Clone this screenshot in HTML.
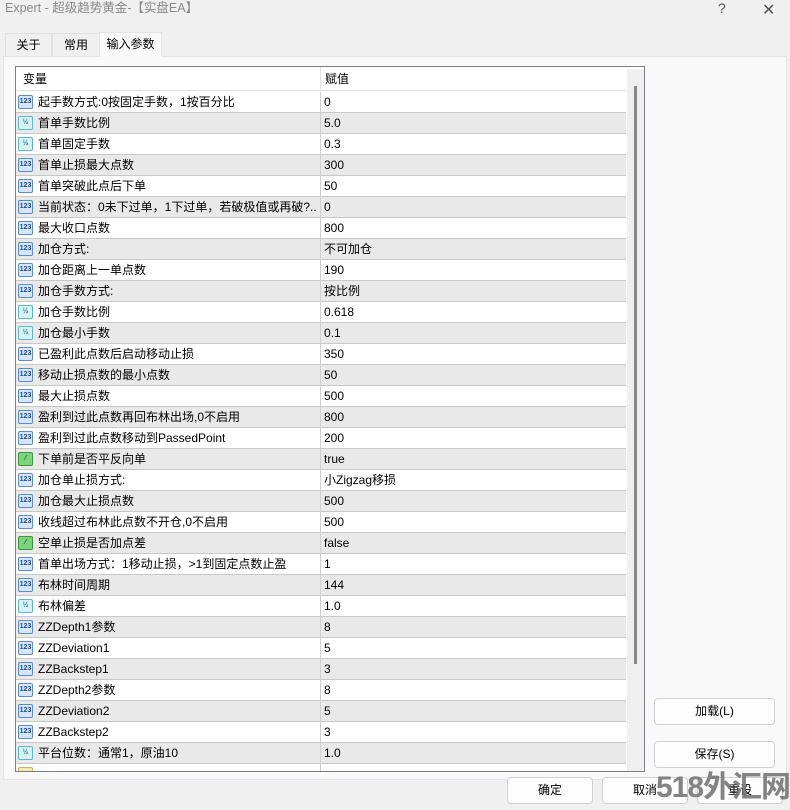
<!DOCTYPE html>
<html><head><meta charset="utf-8"><style>
*{box-sizing:border-box;margin:0;padding:0}
html,body{width:790px;height:810px;overflow:hidden}
body{background:#f0f0f0;font-family:"Liberation Sans","Noto Sans CJK SC",sans-serif;font-size:12px;color:#000;position:relative}
.title{position:absolute;left:5px;top:0;height:20px;line-height:16px;color:#8a8a8a;font-size:12.5px}
.tb{position:absolute;top:0;color:#555;font-size:14px}
.tab{position:absolute;top:33px;height:23px;line-height:23px;text-align:center;background:#f0f0f0;border:1px solid #e0e0e0;border-bottom:none}
.panel{position:absolute;left:3px;top:56px;width:784px;height:724px;background:#f9f9f9;border:1px solid #e3e3e3}
.list{position:absolute;left:15px;top:66px;width:630px;height:706px;border:1px solid #7a7f88;background:#fff;overflow:hidden}
.hdr{position:absolute;left:0;top:0;width:610px;height:24px;background:#fff;border-bottom:1px solid #e0e0e0}
.hdr span{position:absolute;top:0;line-height:24px}
.row{position:absolute;left:0;width:610px;height:21px;border-bottom:1px solid #c8c8c8;line-height:20px}
.row.g{background:#e9e9e9}
.row .n{position:absolute;left:22px;top:0;white-space:nowrap}
.row .v{position:absolute;left:308px;top:0}
.row .d{position:absolute;left:304px;top:0;width:1px;height:21px;background:#d0d0d0}
.ic{position:absolute;left:2px;top:3px;width:15px;height:14px;border-radius:2px;font-size:7px;line-height:12px;text-align:center;font-weight:bold}
.i1{background:#d6e6f8;border:1px solid #5b8ccc;color:#1d4f9c}
.i2{background:#d8f2f6;border:1px solid #5cb8c8;color:#2a7c8c}
.i3{background:#7fd27f;border:1px solid #3a9a3a;color:#135e13}
.i4{background:#f5e9a8;border:1px solid #c9b45a}
.vd{position:absolute;left:304px;top:0;width:1px;height:24px;background:#e0e0e0}
.sb{position:absolute;left:611px;top:2px;width:17px;height:702px;background:#efefef}
.th{position:absolute;left:7px;top:17px;width:3px;height:578px;background:#888}
.btn{position:absolute;height:27px;background:#fdfdfd;border:1px solid #d0d0d0;border-radius:4px;text-align:center;line-height:25px}
.wm{position:absolute;left:656px;top:770px;font-size:30px;line-height:36px;white-space:nowrap;font-weight:bold;color:rgba(110,110,110,.85);letter-spacing:-1px}
</style></head><body>
<div class="title">Expert - 超级趋势黄金-【实盘EA】</div>
<div class="tb" style="left:718px">?</div>
<div class="tb" style="left:762px;font-size:16px">✕</div>
<div class="tab" style="left:5px;width:47px">关于</div>
<div class="tab" style="left:52px;width:48px">常用</div>
<div class="tab" style="left:99px;width:63px;background:#f9f9f9;top:32px;height:25px;z-index:2;border-color:#e3e3e3">输入参数</div>
<div class="panel"></div>
<div class="list">
<div class="hdr"><span style="left:7px">变量</span><div class="vd"></div><span style="left:309px">赋值</span></div>
<div id="rows"></div>
<div class="sb"><div class="th"></div></div>
</div>
<div class="btn" style="left:654px;top:698px;width:121px">加载(L)</div>
<div class="btn" style="left:654px;top:741px;width:121px">保存(S)</div>
<div class="btn" style="left:507px;top:777px;width:86px">确定</div>
<div class="btn" style="left:602px;top:777px;width:86px">取消</div>
<div class="btn" style="left:697px;top:777px;width:86px">重设</div>
<div class="wm">518外汇网</div>
<script>
var d=[[1,"起手数方式:0按固定手数，1按百分比","0"],[2,"首单手数比例","5.0"],[2,"首单固定手数","0.3"],[1,"首单止损最大点数","300"],[1,"首单突破此点后下单","50"],[1,"当前状态：0未下过单，1下过单，若破极值或再破?..","0"],[1,"最大收口点数","800"],[1,"加仓方式:","不可加仓"],[1,"加仓距离上一单点数","190"],[1,"加仓手数方式:","按比例"],[2,"加仓手数比例","0.618"],[2,"加仓最小手数","0.1"],[1,"已盈利此点数后启动移动止损","350"],[1,"移动止损点数的最小点数","50"],[1,"最大止损点数","500"],[1,"盈利到过此点数再回布林出场,0不启用","800"],[1,"盈利到过此点数移动到PassedPoint","200"],[3,"下单前是否平反向单","true"],[1,"加仓单止损方式:","小Zigzag移损"],[1,"加仓最大止损点数","500"],[1,"收线超过布林此点数不开仓,0不启用","500"],[3,"空单止损是否加点差","false"],[1,"首单出场方式：1移动止损，>1到固定点数止盈","1"],[1,"布林时间周期","144"],[2,"布林偏差","1.0"],[1,"ZZDepth1参数","8"],[1,"ZZDeviation1","5"],[1,"ZZBackstep1","3"],[1,"ZZDepth2参数","8"],[1,"ZZDeviation2","5"],[1,"ZZBackstep2","3"],[2,"平台位数：通常1，原油10","1.0"],[4,"",""]];
var t={1:"123",2:"½",3:"⁄",4:""};var h="";
d.forEach(function(r,i){h+='<div class="row'+(i%2?' g':'')+'" style="top:'+(25+i*21)+'px"><div class="ic i'+r[0]+'">'+t[r[0]]+'</div><span class="n">'+r[1]+'</span><div class="d"></div><span class="v">'+r[2]+'</span></div>';});
document.getElementById("rows").innerHTML=h;
</script>
</body></html>
